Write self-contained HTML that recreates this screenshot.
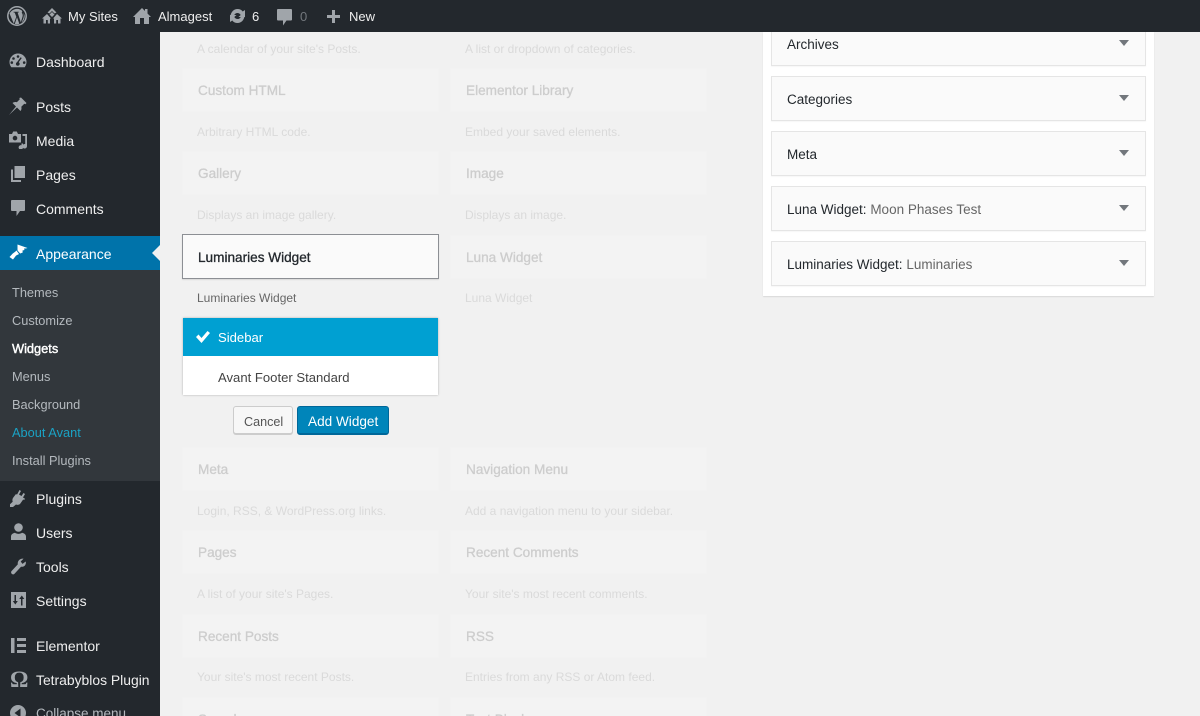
<!DOCTYPE html>
<html><head><meta charset="utf-8"><style>
html,body{margin:0;padding:0;width:1200px;height:716px;overflow:hidden;background:#f1f1f1;font-family:"Liberation Sans",sans-serif}
#page{position:relative;width:1200px;height:716px;overflow:hidden;background:#f1f1f1}
.a{position:absolute;white-space:nowrap}
#bar{left:0;top:0;width:1200px;height:32px;background:#23282d}
#side{left:0;top:32px;width:160px;height:684px;background:#23282d}
.t{position:absolute;white-space:nowrap;font-size:13px;line-height:18px;top:8px;color:#eee}
.u{position:absolute;white-space:nowrap;font-size:13.1px;line-height:18px;color:#eee}
.m{position:absolute;left:36px;white-space:nowrap;font-size:14px;line-height:18px;color:#eee}
.s{position:absolute;left:12px;white-space:nowrap;font-size:12.8px;line-height:18px;color:#b4b9be}
.c{position:absolute;width:255px;height:42px;background:#f3f3f3;border:1px solid #f2f2f2}
.h{position:absolute;white-space:nowrap;font-size:13.6px;color:#cdcdcd;line-height:18px;-webkit-text-stroke:.3px currentColor}
.d{position:absolute;white-space:nowrap;font-size:12px;color:#dadada;line-height:16px}
.r{position:absolute;left:771px;width:373px;height:43px;background:#fafafa;border:1px solid #e5e5e5;box-shadow:0 1px 1px rgba(0,0,0,.04)}
.r span{position:absolute;left:15px;top:14px;font-size:13.5px;line-height:18px;white-space:nowrap;color:#23282d}
.r i{font-style:normal;color:#666}
.r u{position:absolute;left:347px;top:18px;width:0;height:0;border-left:5px solid transparent;border-right:5px solid transparent;border-top:6px solid #72777c}
svg{position:absolute;display:block}
</style></head><body><div id="page">
<div class="a" id="side"></div>

<!-- side icons -->
<svg style="left:9px;top:52px" width="18" height="18" viewBox="0 0 18 18"><path fill-rule="evenodd" d="M9 1.500a8.500 8.500 0 0 1 8.500 8.500c0 2-.7 3.700-1.800 5.200H2.300A8.500 8.500 0 0 1 .5 10 8.500 8.500 0 0 1 9 1.500zM9 3.200a1.300 1.300 0 1 0 0 2.600 1.300 1.300 0 0 0 0-2.600zM4.500 5.200a1.300 1.300 0 1 0 0 2.600 1.300 1.300 0 0 0 0-2.600zM12.800 6L9.700 10.200a1.900 1.900 0 1 1-1.600-.1L11.600 5.300zM2.800 9.300a1.300 1.300 0 1 0 0 2.600 1.300 1.300 0 0 0 0-2.600zM15.200 9.300a1.300 1.300 0 1 0 0 2.600 1.300 1.300 0 0 0 0-2.600z" fill="#a0a5aa"/></svg>
<svg style="left:9px;top:97px" width="18" height="18" viewBox="0 0 18 18"><path d="M12 .5l5.500 5.500-1 1.200-1.200-.5-3 3c.5 1.700.1 3.200-.8 4.300L8 10.500 0 18l7-8.500-3.500-3.500c1.100-.9 2.700-1.300 4.300-.8l3-3-.5-1.200z" fill="#a0a5aa"/></svg>
<svg style="left:9px;top:131px" width="18" height="18" viewBox="0 0 18 18"><path fill-rule="evenodd" d="M0 3h3l1.200-2.500h3.600L9 3h3v8.500H0zM6 4.800a2.300 2.300 0 1 0 0 4.600 2.300 2.300 0 0 0 0-4.600z" fill="#a0a5aa"/><path d="M13.500 3H18v12.200a2.300 2.300 0 1 1-1.800-2.200V5h-2.700zM12.500 12.500h1.500v3.800a2.200 2.200 0 1 1-1.500-2z" fill="#a0a5aa"/></svg>
<svg style="left:11px;top:166px" width="14" height="16" viewBox="0 0 14 16"><path d="M3.500 0H14v12H3.500zM0 3.500h2V14h8v2H0z" fill="#a0a5aa"/></svg>
<svg style="left:11px;top:199px" width="14" height="17" viewBox="0 0 14 17"><path d="M1 1h12.500c.3 0 .5.200.5.500v9.500c0 .6-.4 1-1 1H9L5.500 17v-5H1c-.6 0-1-.4-1-1V2c0-.6.400-1 1-1z" fill="#a0a5aa"/></svg>

<div class="m" style="top:53px">Dashboard</div>
<div class="m" style="top:98px">Posts</div>
<div class="m" style="top:132px">Media</div>
<div class="m" style="top:166px">Pages</div>
<div class="m" style="top:200px">Comments</div>

<div class="a" style="left:0;top:236px;width:160px;height:34px;background:#0073aa"></div>
<div class="a" style="left:152px;top:245px;width:0;height:0;border-top:8px solid transparent;border-bottom:8px solid transparent;border-right:8px solid #f1f1f1"></div>
<svg style="left:9px;top:244px" width="19" height="16" viewBox="0 0 19 16"><path d="M8.500 0.500L18.500 4c-1.500.6-2.500.6-3.500.5l.5 1.500-2 .5.200 2-2.500 1L8.500 6.500zM7.500 6.500l2.500 3.500c-1 .8-2.300 1-3 1.600L4 15.500.5 13 3.500 9.800c.8-.8 2.800-2 4-3.300z" fill="#fff"/></svg>
<div class="m" style="top:245px;color:#fff">Appearance</div>

<div class="a" style="left:0;top:270px;width:160px;height:211px;background:#32373c"></div>
<div class="s" style="top:284px">Themes</div>
<div class="s" style="top:312px">Customize</div>
<div class="s" style="top:340px;color:#fff;-webkit-text-stroke:.4px #fff">Widgets</div>
<div class="s" style="top:368px">Menus</div>
<div class="s" style="top:396px">Background</div>
<div class="s" style="top:424px;color:#1ba2c4">About Avant</div>
<div class="s" style="top:452px">Install Plugins</div>

<svg style="left:10px;top:490px" width="16" height="17" viewBox="0 0 16 17"><path d="M9.500 0l1.500 1-2 3.500 2.500 1.500L13.500 3 15 4l-2 3.500 2 1.200-.8 1.300-1-.5L10 14c-1.300 1-2.800 1-4 .5L3 17H0v-2.800l2.700-2.500c-.5-1.500-.4-3 .6-4.200L6 4l1 .6z" fill="#a0a5aa"/></svg>
<svg style="left:11px;top:523px" width="15" height="17" viewBox="0 0 15 17"><circle cx="7.500" cy="4.500" r="4.300" fill="#a0a5aa"/><path d="M0 17v-3.500c0-2 1.800-3.200 4-3.700 1.500 1.400 5.500 1.400 7 0 2.200.5 4 1.700 4 3.700V17z" fill="#a0a5aa"/></svg>
<svg style="left:10px;top:558px" width="16" height="17" viewBox="0 0 16 17"><path d="M15.700 3.500c.8 2.700-1.200 5.800-4.700 5.200L4.500 15.800c-1.500 1.700-4.500-.5-3-2.700L7.800 6.400C7.200 3 10 .2 13.500.7L10.700 3.500l1.800 2.400z" fill="#a0a5aa"/></svg>
<svg style="left:11px;top:592px" width="15" height="16" viewBox="0 0 15 16"><path fill-rule="evenodd" d="M0 0h15v16H0zM3.500 3v6H1.800l2.500 3.500L6.800 9H5V3zM10 13.500V7H8.200l2.600-3.500L13.300 7h-1.800v6.500z" fill="#a0a5aa"/></svg>
<svg style="left:11px;top:638px" width="15" height="15" viewBox="0 0 15 15"><path d="M0 0h3.500v15H0zM6 0h9v3H6zM6 6h9v3H6zM6 12h9v3H6z" fill="#a0a5aa"/></svg>
<div class="a" style="left:10px;top:668px;font:bold 23px/24px 'Liberation Serif',serif;color:#a0a5aa">Ω</div>
<svg style="left:10px;top:705px" width="16" height="16" viewBox="0 0 16 16"><circle cx="8" cy="8" r="8" fill="#a0a5aa"/><path d="M10.500 3.500v9L4.500 8z" fill="#23282d"/></svg>

<div class="m" style="top:490px">Plugins</div>
<div class="m" style="top:524px">Users</div>
<div class="m" style="top:558px">Tools</div>
<div class="m" style="top:592px">Settings</div>
<div class="m" style="top:637px">Elementor</div>
<div class="m" style="top:671px;font-size:13.9px">Tetrabyblos Plugin</div>
<div class="m" style="top:705px;color:#b4b9be;font-size:13.5px">Collapse menu</div>

<!-- faded available widgets -->
<div class="d" style="left:197px;top:41px">A calendar of your site's Posts.</div>
<div class="d" style="left:465px;top:41px">A list or dropdown of categories.</div>

<div class="c" style="left:182px;top:68px"></div><div class="c" style="left:450px;top:68px"></div>
<div class="h" style="left:198px;top:82px">Custom HTML</div><div class="h" style="left:466px;top:82px">Elementor Library</div>
<div class="d" style="left:197px;top:124px">Arbitrary HTML code.</div><div class="d" style="left:465px;top:124px">Embed your saved elements.</div>

<div class="c" style="left:182px;top:151px"></div><div class="c" style="left:450px;top:151px"></div>
<div class="h" style="left:198px;top:165px">Gallery</div><div class="h" style="left:466px;top:165px">Image</div>
<div class="d" style="left:197px;top:207px">Displays an image gallery.</div><div class="d" style="left:465px;top:207px">Displays an image.</div>

<div class="c" style="left:450px;top:235px"></div>
<div class="h" style="left:466px;top:249px">Luna Widget</div>
<div class="d" style="left:465px;top:290px">Luna Widget</div>

<!-- chosen widget -->
<div class="a" style="left:182px;top:234px;width:255px;height:43px;background:#fafafa;border:1px solid #8c8f94;box-shadow:0 1px 1px rgba(0,0,0,.1)"></div>
<div class="h" style="left:198px;top:249px;color:#23282d">Luminaries Widget</div>
<div class="d" style="left:197px;top:290px;color:#666">Luminaries Widget</div>

<div class="a" style="left:183px;top:318px;width:255px;height:77px;background:#fff;box-shadow:0 0 2px rgba(0,0,0,.3)"></div>
<div class="a" style="left:183px;top:318px;width:255px;height:38px;background:#00a0d2"></div>
<svg style="left:195px;top:330px" width="16" height="14" viewBox="0 0 16 14"><path d="M1 7l2.500-2.500L6.500 8 12.500 1l2.500 2L6.500 13z" fill="#fff"/></svg>
<div class="u" style="left:218px;top:329px;color:#fff">Sidebar</div>
<div class="u" style="left:218px;top:369px;color:#444">Avant Footer Standard</div>

<div class="a" style="left:233px;top:406px;width:58px;height:26px;background:#f7f7f7;border:1px solid #ccc;border-radius:3px;box-shadow:0 1px 0 #ccc"></div>
<div class="u" style="left:244px;top:413px;color:#555;font-size:12.6px">Cancel</div>
<div class="a" style="left:297px;top:406px;width:90px;height:26px;background:#0085ba;border:1px solid #006799;border-bottom-width:2px;border-radius:3px"></div>
<div class="u" style="left:308px;top:413px;color:#fff;font-size:13.6px">Add Widget</div>

<div class="c" style="left:182px;top:447px"></div><div class="c" style="left:450px;top:447px"></div>
<div class="h" style="left:198px;top:461px">Meta</div><div class="h" style="left:466px;top:461px">Navigation Menu</div>
<div class="d" style="left:197px;top:503px">Login, RSS, &amp; WordPress.org links.</div><div class="d" style="left:465px;top:503px">Add a navigation menu to your sidebar.</div>

<div class="c" style="left:182px;top:530px"></div><div class="c" style="left:450px;top:530px"></div>
<div class="h" style="left:198px;top:544px">Pages</div><div class="h" style="left:466px;top:544px">Recent Comments</div>
<div class="d" style="left:197px;top:586px">A list of your site's Pages.</div><div class="d" style="left:465px;top:586px">Your site's most recent comments.</div>

<div class="c" style="left:182px;top:614px"></div><div class="c" style="left:450px;top:614px"></div>
<div class="h" style="left:198px;top:628px">Recent Posts</div><div class="h" style="left:466px;top:628px">RSS</div>
<div class="d" style="left:197px;top:669px">Your site's most recent Posts.</div><div class="d" style="left:465px;top:669px">Entries from any RSS or Atom feed.</div>

<div class="c" style="left:182px;top:697px"></div><div class="c" style="left:450px;top:697px"></div>
<div class="h" style="left:198px;top:711px">Search</div><div class="h" style="left:466px;top:711px">Text Block</div>

<!-- right panel -->
<div class="a" style="left:763px;top:32px;width:391px;height:264px;background:#fff;box-shadow:0 1px 1px rgba(0,0,0,.1)"></div>
<div class="r" style="top:21px"><span>Archives</span><u></u></div>
<div class="r" style="top:76px"><span>Categories</span><u></u></div>
<div class="r" style="top:131px"><span>Meta</span><u></u></div>
<div class="r" style="top:186px"><span>Luna Widget: <i>Moon Phases Test</i></span><u></u></div>
<div class="r" style="top:241px"><span>Luminaries Widget: <i>Luminaries</i></span><u></u></div>

<!-- top bar -->
<div class="a" id="bar"></div>
<svg style="left:7px;top:6px" width="20" height="20" viewBox="0 0 20 20"><circle cx="10" cy="10" r="9.200" fill="none" stroke="#a0a5aa" stroke-width="1.500"/><path d="M2.500 7.500L6.800 17.600 9.300 10.700 7.700 6.600 6.500 6.400V5.800H11.800V6.400L10.600 6.600 13.800 16.300 15 12.500C15.800 10 16 9 15.200 7.500 14.700 6.600 14.600 6 15.400 5.200 13.800 3.300 11.300 2.600 9 3 6.500 3.300 4 5 2.500 7.500zM10 11.200L7.800 17.900C9.200 18.300 10.800 18.300 12.300 17.700z" fill="#a0a5aa"/><path d="M16.500 7c.8 2.500.3 5-2 9.500 2.500-1.700 4.500-6 2-9.500z" fill="#a0a5aa"/></svg>
<svg style="left:42px;top:8px" width="20" height="16" viewBox="0 0 20 16"><path fill-rule="evenodd" d="M10 0l4.500 4.500-2 1L10 3 7.500 5.500l-2-1zM10 4l2.500 2.500L10 9 7.500 6.500zM5 6l4 4.500H8v5H1.500v-5H0zM15 6l5 4.500h-1.500v5H12v-5h-1zM4 12v3.500h1.800V12zM14.200 12v3.500H16V12z" fill="#a0a5aa"/></svg>
<svg style="left:133px;top:8px" width="18" height="16" viewBox="0 0 18 16"><path fill-rule="evenodd" d="M9 0l3 3V1h2.500v4.500L18 9h-2v7H2V9H0zM7 10v6h4v-6z" fill="#a0a5aa"/></svg>
<svg style="left:228px;top:9px" width="19" height="14" viewBox="0 0 19 14"><path d="M9.500 0c2.300 0 4 .9 5.200 2.500L17 1v7h-6.500l2.200-2c-.8-1.200-1.900-2-3.200-2-1.800 0-3.100 1.200-3.500 2.800H2.500C3 3 5.800 0 9.500 0zM2 13V6h6.500L6.300 8c.8 1.200 1.900 2 3.200 2 1.800 0 3.100-1.200 3.500-2.800h3.500C16 11 13.200 14 9.500 14c-2.300 0-4-.9-5.200-2.500z" fill="#a0a5aa"/></svg>
<svg style="left:277px;top:8px" width="16" height="18" viewBox="0 0 16 18"><path d="M1 1h13c.6 0 1 .4 1 1v9.500c0 .6-.4 1-1 1H9.500L6 17.500v-5H1c-.6 0-1-.4-1-1V2c0-.6.400-1 1-1z" fill="#a0a5aa"/></svg>
<svg style="left:326px;top:9px" width="15" height="15" viewBox="0 0 15 15"><path d="M6 1h3v5h5v3H9v5H6V9H1V6h5z" fill="#a0a5aa"/></svg>
<div class="t" style="left:68px">My Sites</div>
<div class="t" style="left:158px">Almagest</div>
<div class="t" style="left:252px">6</div>
<div class="t" style="left:300px;color:#72777c">0</div>
<div class="t" style="left:349px">New</div>
</div></body></html>
